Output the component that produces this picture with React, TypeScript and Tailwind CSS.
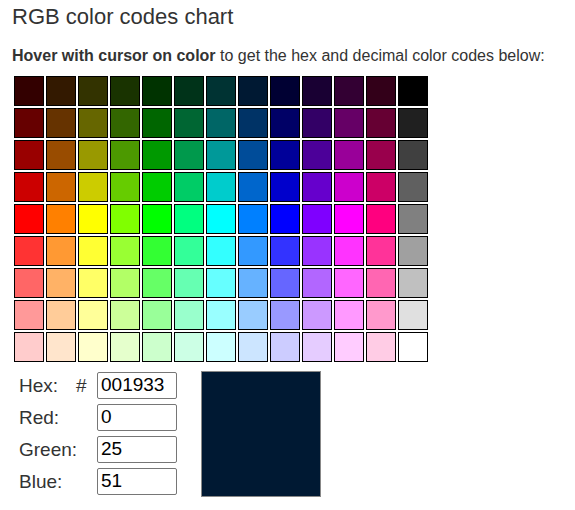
import React from "react";

// RGB chart rows, darkest to lightest; last column is the gray ramp.
const ROWS: string[][] = [
  ["330000", "331900", "333300", "193300", "003300", "003319", "003333", "001933", "000033", "190033", "330033", "330019", "000000"],
  ["660000", "663300", "666600", "336600", "006600", "006633", "006666", "003366", "000066", "330066", "660066", "660033", "202020"],
  ["990000", "994c00", "999900", "4c9900", "009900", "00994c", "009999", "004c99", "000099", "4c0099", "990099", "99004c", "404040"],
  ["cc0000", "cc6600", "cccc00", "66cc00", "00cc00", "00cc66", "00cccc", "0066cc", "0000cc", "6600cc", "cc00cc", "cc0066", "606060"],
  ["ff0000", "ff8000", "ffff00", "80ff00", "00ff00", "00ff80", "00ffff", "0080ff", "0000ff", "7f00ff", "ff00ff", "ff007f", "808080"],
  ["ff3333", "ff9933", "ffff33", "99ff33", "33ff33", "33ff99", "33ffff", "3399ff", "3333ff", "9933ff", "ff33ff", "ff3399", "a0a0a0"],
  ["ff6666", "ffb266", "ffff66", "b2ff66", "66ff66", "66ffb2", "66ffff", "66b2ff", "6666ff", "b266ff", "ff66ff", "ff66b2", "c0c0c0"],
  ["ff9999", "ffcc99", "ffff99", "ccff99", "99ff99", "99ffcc", "99ffff", "99ccff", "9999ff", "cc99ff", "ff99ff", "ff99cc", "e0e0e0"],
  ["ffcccc", "ffe5cc", "ffffcc", "e5ffcc", "ccffcc", "ccffe5", "ccffff", "cce5ff", "ccccff", "e5ccff", "ffccff", "ffcce5", "ffffff"],
];

const FIELDS: { label: string; hash?: boolean }[] = [
  { label: "Hex:", hash: true },
  { label: "Red:" },
  { label: "Green:" },
  { label: "Blue:" },
];

export default function App() {
  const [hex, setHex] = React.useState("001933");
  const r = parseInt(hex.slice(0, 2), 16);
  const g = parseInt(hex.slice(2, 4), 16);
  const b = parseInt(hex.slice(4, 6), 16);
  const values = [hex.toUpperCase(), String(r), String(g), String(b)];

  return (
    <div className="min-h-[510px] bg-white px-3 pt-[4px] font-['Liberation_Sans',Arial,sans-serif] text-[#333]">
      <h1 className="text-[22px] leading-[26px] font-normal">RGB color codes chart</h1>

      <p className="mt-[16px] text-[16px] leading-[20px]">
        <b>Hover with cursor on color</b> to get the hex and decimal color codes below:
      </p>

      <div className="mt-[10px] ml-[2px] grid w-max grid-cols-[repeat(13,30px)] gap-[2px]">
        {ROWS.flat().map((c) => (
          <div
            key={c}
            onMouseEnter={() => setHex(c)}
            className="h-[30px] w-[30px] border border-black"
            style={{ backgroundColor: "#" + c }}
          />
        ))}
      </div>

      <div className="mt-[9px] flex items-start gap-6 pl-[7px]">
        <div className="flex flex-col gap-[5px] pt-[1px]">
          {FIELDS.map((f, i) => (
            <div key={f.label} className="flex items-center">
              <span className="w-[57px] text-[19px] leading-[22px]">{f.label}</span>
              <span className="w-[21px] text-[19px] leading-[22px]">{f.hash ? "#" : ""}</span>
              <input
                readOnly
                value={values[i]}
                className="h-[27px] w-[80px] rounded-[2px] border border-[#767676] px-[3px] text-[19px] text-black outline-none"
              />
            </div>
          ))}
        </div>
        <div
          className="h-[126px] w-[120px] border border-[#888]"
          style={{ backgroundColor: "#" + hex }}
        />
      </div>
    </div>
  );
}
